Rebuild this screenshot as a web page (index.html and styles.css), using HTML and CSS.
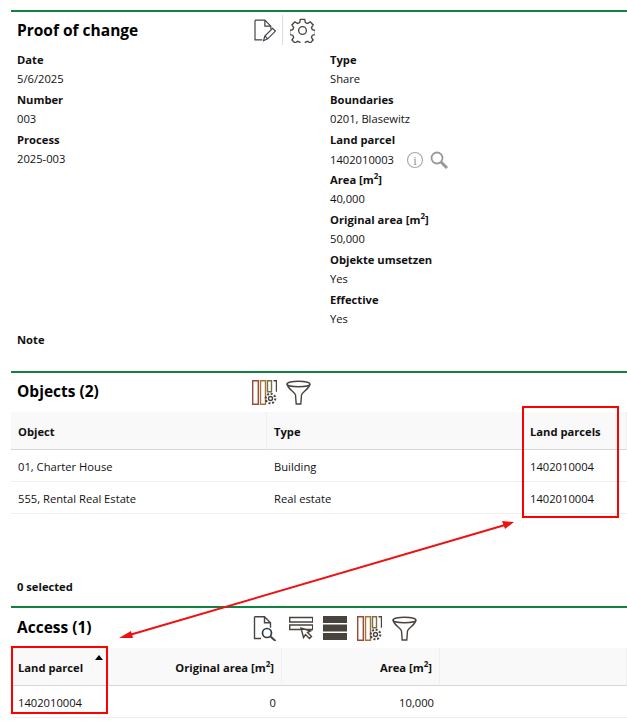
FILE: index.html
```html
<!DOCTYPE html>
<html lang="en">
<head>
<meta charset="utf-8">
<title>Proof of change</title>
<link rel="stylesheet" href="styles.css">
</head>
<body>
<div class="page">
  <section class="section detail">
    <header class="head">
      <h2 class="title">Proof of change</h2>
      <div class="tools tools-a">
        <svg class="icon" width="24" height="24" viewBox="0 0 28 28"><path class="ln" d="M3.500 2.500H15L22 9.500V13M15 2.500V9.500H22M3.500 2.500V25.500H12" /><path class="ln dark" d="M13.500 26.500l1.500-5.500L24 12l3.300 3.300-9 9z"/><path class="ln" d="M15 21l3.300 3.300"/></svg>
        <span class="tool-sep"></span>
        <svg class="icon gear" width="25" height="25" viewBox="0 0 26 26"><path class="ln" d="M10.700 2h4.600l.7 3.200 2.200 1 2.900-1.700 3 3.200-1.800 2.700.9 2.300 3.200.6v4.400l-3.200.7-.9 2.200 1.800 2.800-3.100 3.100-2.800-1.800-2.200.9-.7 3.200h-4.400l-.7-3.200-2.300-.9-2.800 1.800-3.100-3.100 1.800-2.800-.9-2.200-3.200-.7v-4.400l3.200-.6.9-2.300-1.800-2.700 3-3.200 2.900 1.700 2.200-1z" transform="translate(0 -.5)"/><circle class="ln" cx="13" cy="13" r="4"/></svg>
      </div>
    </header>
    <div class="fields">
      <div class="col">
        <div class="label">Date</div><div class="value">5/6/2025</div>
        <div class="label">Number</div><div class="value">003</div>
        <div class="label">Process</div><div class="value">2025-003</div>
      </div>
      <div class="col">
        <div class="label">Type</div><div class="value">Share</div>
        <div class="label">Boundaries</div><div class="value">0201, Blasewitz</div>
        <div class="label">Land parcel</div>
        <div class="value value-icons">1402010003
          <svg class="info" width="18" height="18" viewBox="0 0 18 18"><circle class="grey" cx="9" cy="9" r="7.500"/><text class="info-i" x="9" y="13.500" text-anchor="middle">i</text></svg>
          <svg class="search" width="20" height="20" viewBox="0 0 20 20"><circle class="greyb" cx="8" cy="8" r="5.500"/><path class="greyb thick" d="M12 12l6 6"/></svg>
        </div>
        <div class="label">Area [m<sup>2</sup>]</div><div class="value">40,000</div>
        <div class="label">Original area [m<sup>2</sup>]</div><div class="value">50,000</div>
        <div class="label">Objekte umsetzen</div><div class="value">Yes</div>
        <div class="label">Effective</div><div class="value">Yes</div>
      </div>
    </div>
    <div class="label">Note</div>
  </section>

  <section class="section objects">
    <header class="head head-b">
      <h2 class="title">Objects (2)</h2>
      <div class="tools tools-b">
        <svg class="icon" width="25" height="25" viewBox="0 0 25 25"><path class="ln red" d="M.7.700h5.600v23.600H.7z"/><path class="ln orange" d="M8.500.700h5v23.600h-5z"/><path class="ln green" d="M15.500.700h4v11h-4z"/><path class="ln" d="M21.500.700h3v11"/><circle class="ln" cx="18.500" cy="18.500" r="2"/><circle class="ln dash" cx="18.500" cy="18.500" r="4.800"/></svg>
        <svg class="icon" width="25" height="25" viewBox="0 0 25 25"><ellipse class="ln" cx="12.500" cy="4" rx="11.500" ry="2.800"/><path class="ln" d="M1 4c1 5 7.500 8 8.500 11l.7 9h4.600l.7-9c1-3 7.500-6 8.500-11"/></svg>
      </div>
    </header>
    <div class="table table-objects">
      <div class="th">Object</div><div class="th">Type</div><div class="th">Land parcels</div>
      <div class="td">01, Charter House</div><div class="td">Building</div><div class="td">1402010004</div>
      <div class="td">555, Rental Real Estate</div><div class="td">Real estate</div><div class="td">1402010004</div>
    </div>
    <div class="label selected">0 selected</div>
  </section>

  <section class="section access">
    <header class="head head-c">
      <h2 class="title">Access (1)</h2>
      <div class="tools tools-c">
        <svg class="icon" width="26" height="25" viewBox="0 0 26 25"><path class="ln" d="M1.500.700h10l6 6v5M11.500.700v6h6M1.500.700V22.500H8"/><circle class="ln dark2" cx="14" cy="17" r="4.500"/><path class="ln thick" d="M17.500 20.500l5 4.500"/></svg>
        <svg class="icon" width="24" height="25" viewBox="0 0 24 25"><path class="ln" d="M.7 1.500h23v4.500H.7zM.7 9h23v4.500H.7z"/><path class="ln white" d="M12 12l2.500 9.500 2-3 4 4 2-2-4-4 3-1.500z"/></svg>
        <svg class="icon" width="24" height="24" viewBox="0 0 24 24"><path class="bar" d="M0 0h24v7H0zM0 8.500h24v7H0zM0 17h24v7H0z"/></svg>
        <svg class="icon" width="25" height="25" viewBox="0 0 25 25"><path class="ln red" d="M.7.700h5.600v23.600H.7z"/><path class="ln orange" d="M8.500.700h5v23.600h-5z"/><path class="ln green" d="M15.500.700h4v11h-4z"/><path class="ln" d="M21.500.700h3v11"/><circle class="ln" cx="18.500" cy="18.500" r="2"/><circle class="ln dash" cx="18.500" cy="18.500" r="4.800"/></svg>
        <svg class="icon" width="25" height="25" viewBox="0 0 25 25"><ellipse class="ln" cx="12.500" cy="4" rx="11.500" ry="2.800"/><path class="ln" d="M1 4c1 5 7.500 8 8.500 11l.7 9h4.600l.7-9c1-3 7.500-6 8.500-11"/></svg>
      </div>
    </header>
    <div class="table table-access">
      <div class="th th-sort">Land parcel<span class="caret"></span></div><div class="th num">Original area [m<sup>2</sup>]</div><div class="th num">Area [m<sup>2</sup>]</div><div class="th"></div>
      <div class="td">1402010004</div><div class="td num">0</div><div class="td num">10,000</div><div class="td"></div>
    </div>
  </section>
</div>
<div class="mark mark-a"></div>
<div class="mark mark-b"></div>
<svg class="arrow" width="627" height="727" viewBox="0 0 627 727"><path class="arrow-line" d="M126 636 505 525"/><path class="arrow-head" d="M514 522 502 521 505 529zM119 638 131 631 133 638z"/></svg>
</body>
</html>
```
FILE: styles.css
```css
* { box-sizing: border-box; }
html, body { margin: 0; padding: 0; background: #fff; }
body {
  font-family: "Open Sans", "Noto Sans", sans-serif;
  font-size: 11.2px;
  color: #111;
  width: 627px;
  height: 727px;
  overflow: hidden;
  position: relative;
}
.page { padding: 10px 0 0 11px; }
.section { border-top: 2px solid #128243; }
.detail { height: 361px; padding: 0 6px; }
.objects { height: 235px; }
.access { height: 120px; }
.head { display: flex; align-items: center; height: 36px; }
.head-b { height: 39px; padding-left: 6px; }
.head-c { height: 40px; padding-left: 6px; }
.head-b .title, .head-c .title { margin-bottom: 3px; }
.title { margin: 0; font-size: 15.5px; font-weight: 700; color: #000; line-height: 20px; }
.tools { display: flex; align-items: center; position: absolute; }
.tools-a { left: 252px; gap: 6px; }
.tools-b { left: 252px; gap: 9px; }
.tools-c { left: 253px; gap: 10px; }
.tool-sep { width: 1px; height: 30px; background: #ddd; }
.gear { margin-left: 1px; }
.icon { display: block; }
.ln { fill: none; stroke: #4a4440; stroke-width: 1.400; }
.ln.dark { stroke: #3c4450; }
.ln.dark2 { stroke: #2e3a4a; stroke-width: 1.700; }
.ln.red { stroke: #9c4a38; }
.ln.orange { stroke: #a8703a; }
.ln.green { stroke: #7a6f44; }
.ln.white { fill: #fff; }
.ln.dash { stroke-width: 2; stroke-dasharray: 2 1.700; }
.ln.thick { stroke-width: 2; }
.bar { fill: #49433d; }
.grey { fill: none; stroke: #aaa; stroke-width: 1.200; }
.greyb { fill: none; stroke: #999; stroke-width: 1.800; }
.greyb.thick { stroke-width: 3; }
.info-i { font-family: "Liberation Serif", serif; font-size: 13px; fill: #999; }
.fields { display: grid; grid-template-columns: 313px 1fr; padding-top: 2px; }
.label { font-weight: 700; color: #111; line-height: 19px; height: 20px; }
.value { line-height: 18px; height: 20px; }
sup { font-size: 8px; line-height: 0; }
.value-icons { display: flex; align-items: center; gap: 6px; }
.info { margin-left: 6px; }
.search { margin-left: -1px; }
.table { display: grid; }
.table-objects { grid-template-columns: 256px 256px 1fr; }
.table-access { grid-template-columns: 98px 173px 158px 1fr; }
.th {
  height: 38px;
  background: #f9f9f9;
  border-bottom: 1px solid #d6d6d6;
  border-right: 1px solid #f0f0f0;
  font-weight: 700;
  color: #111;
  padding: 10px 7px 0;
  line-height: 20px;
  position: relative;
}
.td {
  height: 32px;
  border-bottom: 1px solid #eee;
  padding: 0 6px 0 7px;
  line-height: 34px;
}
.num { text-align: right; }
.caret {
  position: absolute;
  top: 7px;
  right: 5px;
  border: 4px solid transparent;
  border-top: 0;
  border-bottom: 5px solid #000;
}
.selected { padding-left: 6px; margin-top: 63px; }
.mark { position: absolute; border: 2px solid #f00; }
.mark-a { left: 522px; top: 406px; width: 97px; height: 112px; }
.mark-b { left: 11px; top: 646px; width: 97px; height: 68px; }
.arrow { position: absolute; left: 0; top: 0; pointer-events: none; }
.arrow-line { stroke: #ee1111; stroke-width: 2; fill: none; }
.arrow-head { fill: #ee1111; }
```
